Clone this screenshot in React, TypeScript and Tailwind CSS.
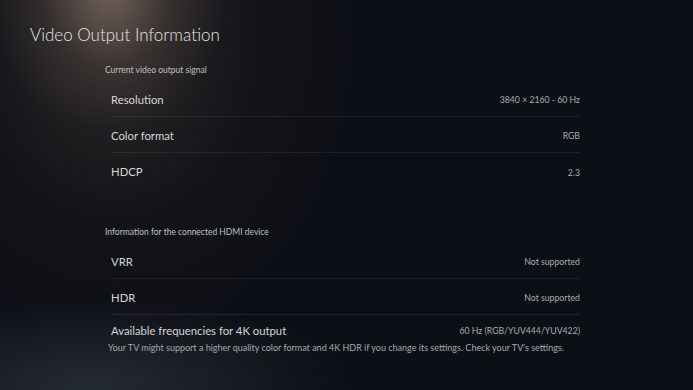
import type { ReactNode } from 'react'

interface RowProps {
  label: string
  value: string
  divider?: boolean
}

function Row({ label, value, divider = true }: RowProps) {
  return (
    <div
      className={`ml-[6px] flex h-[36px] items-center justify-between pt-[3px] ${
        divider ? 'border-b border-white/[0.07]' : ''
      }`}
    >
      <span className="text-[11.3px] text-[#d4d7d9]">{label}</span>
      <span className="text-[8.7px] text-[#a9adb1]">{value}</span>
    </div>
  )
}

function Section({ title, children }: { title: string; children: ReactNode }) {
  return (
    <div>
      <div className="flex h-[22px] items-center text-[8.5px] text-[#bcc0c3]">{title}</div>
      {children}
    </div>
  )
}

export default function App() {
  return (
    <div className="relative h-[390px] w-[693px] overflow-hidden bg-[#0c0f15] font-['Lato','Open_Sans',sans-serif]">
      {/* spotlight + floor glow */}
      <div className="pointer-events-none absolute inset-0 bg-[radial-gradient(ellipse_260px_90px_at_90px_385px,rgba(58,66,74,0.55),transparent_100%)]" />
      <div className="pointer-events-none absolute inset-0 bg-[radial-gradient(ellipse_240px_300px_at_115px_40px,rgba(75,64,58,0.5),rgba(40,36,36,0.25)_60%,transparent_100%)]" />
      <div className="pointer-events-none absolute inset-0 bg-[radial-gradient(ellipse_120px_150px_at_108px_-15px,rgba(165,140,125,0.6),rgba(110,92,82,0.25)_55%,transparent_100%)]" />

      <div className="relative">
        <h1 className="pl-[30px] pt-[22px] text-[17px] font-light leading-[26px] text-[#e2e5e7]">
          Video Output Information
        </h1>

        <div className="mt-[11px] w-[475px] pl-[105px] box-content">
          <Section title="Current video output signal">
            <Row label="Resolution" value="3840 × 2160 - 60 Hz" />
            <Row label="Color format" value="RGB" />
            <Row label="HDCP" value="2.3" divider={false} />
          </Section>

          <div className="mt-[32px]">
            <Section title="Information for the connected HDMI device">
              <Row label="VRR" value="Not supported" />
              <Row label="HDR" value="Not supported" />
              <div className="pl-[3px] pt-[8px]">
                <div className="flex items-center justify-between pl-[3px] leading-[16px]">
                  <span className="text-[11.3px] text-[#d4d7d9]">Available frequencies for 4K output</span>
                  <span className="text-[8.7px] text-[#a9adb1]">60 Hz (RGB/YUV444/YUV422)</span>
                </div>
                <p className="mt-[2px] text-[9px] leading-[14px] text-[#a4a9ad]">
                  Your TV might support a higher quality color format and 4K HDR if you change its settings. Check your TV's settings.
                </p>
              </div>
            </Section>
          </div>
        </div>
      </div>
    </div>
  )
}
